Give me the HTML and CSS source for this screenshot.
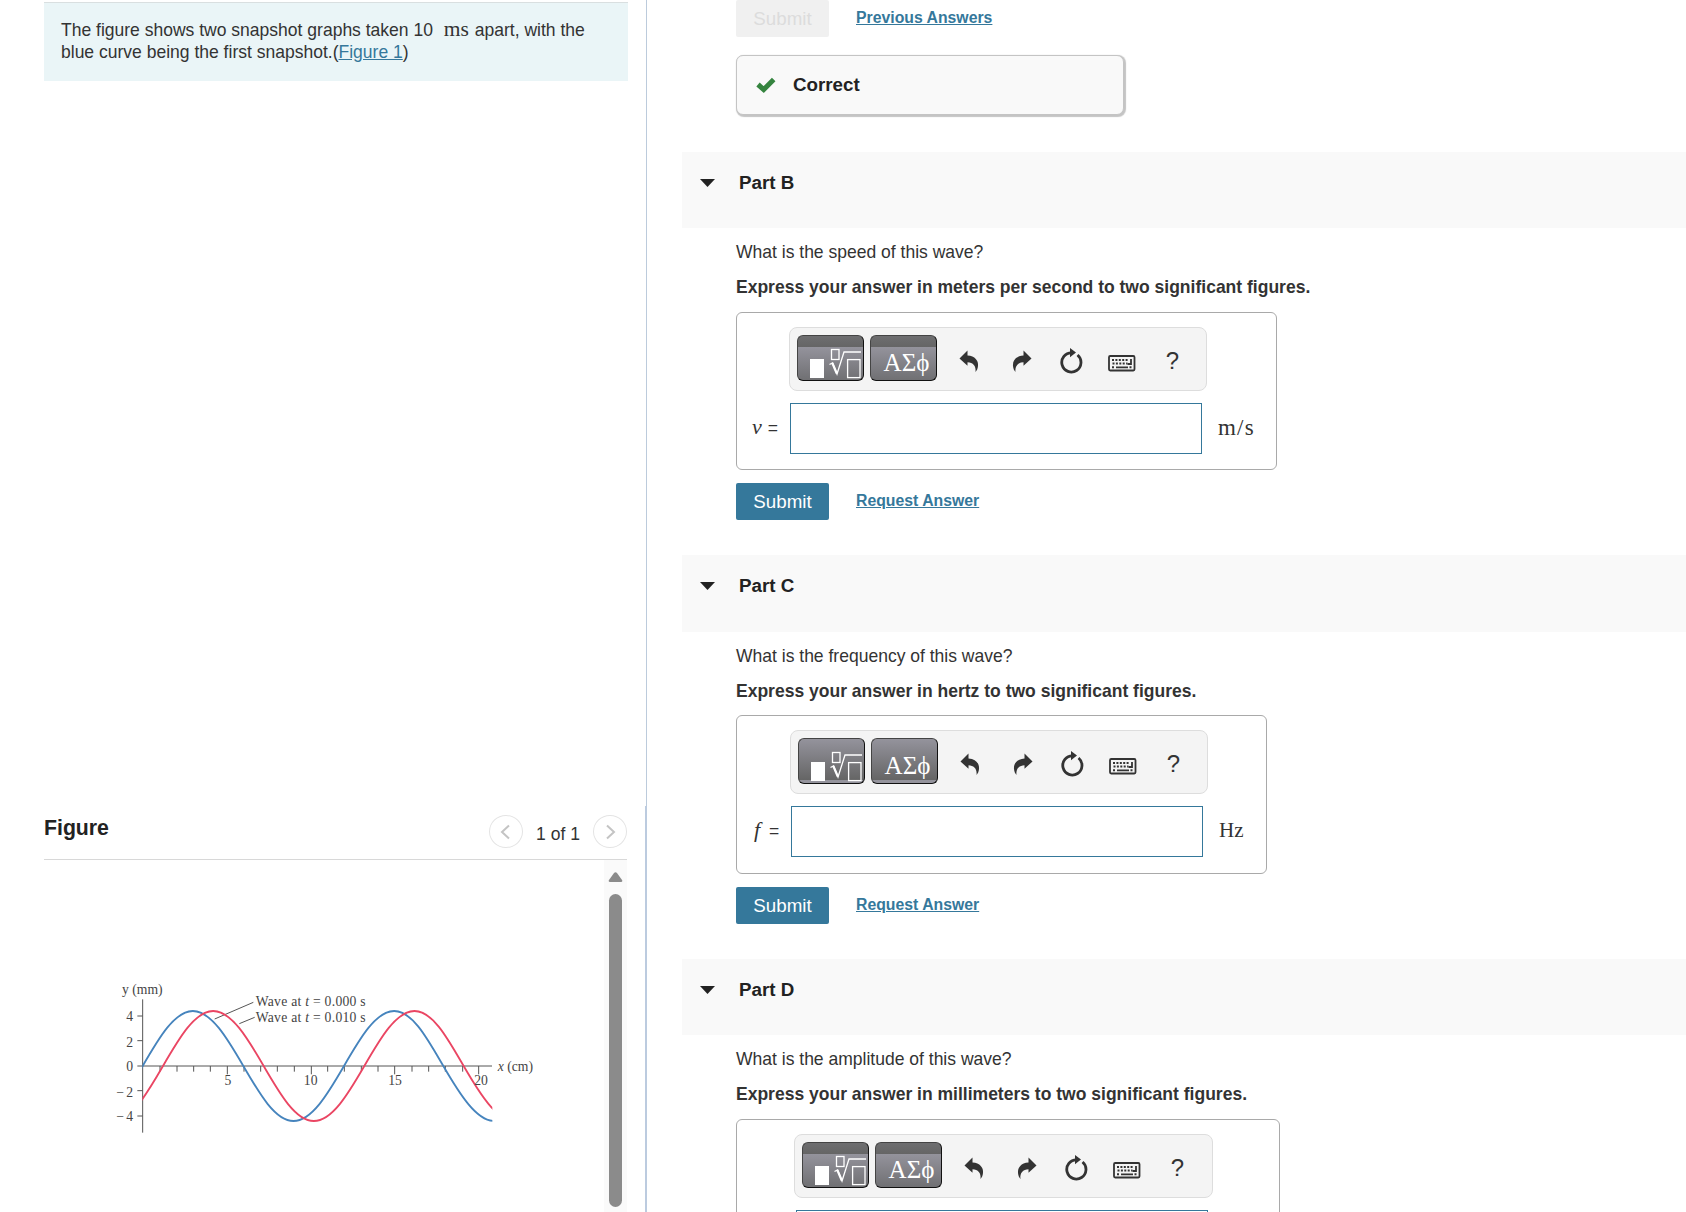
FILE: index.html
```html
<!DOCTYPE html>
<html lang="en">
<head>
  <meta charset="UTF-8" />
  <meta name="viewport" content="width=device-width, initial-scale=1.0"/>
  <title>Snapshot graphs</title>
  <link rel="stylesheet" href="styles.css">
</head>
<body>
  <!-- shared icons -->
  <svg class="sprite">
    <symbol id="i-root" viewBox="0 0 67 46">
      <rect x="13" y="24" width="14" height="19" fill="#fff"/>
      <g fill="none" stroke="#fff">
        <rect x="34.5" y="14.5" width="7.500" height="10" stroke-width="1.300"/>
        <path d="M32.500 29.500l3-1.500 4.500 11L47 17H64" stroke-width="1.300"/>
        <path d="M35.300 28l4.500 10.500" stroke-width="2.200"/>
        <rect x="50.600" y="24.600" width="12.400" height="18" stroke-width="1.300"/>
      </g>
    </symbol>
    <symbol id="i-undo" viewBox="0 0 20 22">
      <path d="M0.500 8.500L8.500 0.500V5.500C16 6 19.500 10.500 19 16C18.800 18.500 17.800 20.500 16.500 22C17.300 16 14 12.500 8.500 12.300V15.800Z"/>
    </symbol>
    <symbol id="i-reset" viewBox="0 0 24 26">
      <path d="M17.500 6.200A9.600 9.600 0 1 1 11.500 4.800" fill="none" stroke="#333" stroke-width="2.800" transform="rotate(8 12 14)"/>
      <path d="M11 0L17 4.600L11 9.200Z"/>
    </symbol>
    <symbol id="i-keys" viewBox="0 0 28 17">
      <rect x="1" y="1" width="25.500" height="14.500" rx="1.200" fill="none" stroke="#333" stroke-width="1.800"/>
      <path d="M4 5h17M4.500 8.500h15M4 12.300h2M21.500 12.300h2" fill="none" stroke="#333" stroke-width="1.900" stroke-dasharray="2 1.400"/>
      <path d="M8 12.300h12M23 4v5h-3.500" fill="none" stroke="#333" stroke-width="1.800"/>
    </symbol>
  </svg>

  <div class="page">
    <aside class="left">
      <section class="intro-pane">
        <div class="intro">
          The figure shows two snapshot graphs taken 10 <span class="math ms">ms</span> apart, with the blue curve being the first snapshot.(<a href="#">Figure 1</a>)
        </div>
      </section>

      <section class="figure-pane">
        <div class="figure-header">
          <h2>Figure</h2>
          <div class="pager">
            <button class="round prev"><svg width="12" height="16" viewBox="0 0 12 16"><path d="M10 1.500L3 8l7 6.500"/></svg></button>
            <span>1 of 1</span>
            <button class="round next"><svg width="12" height="16" viewBox="0 0 12 16"><path d="M2 1.500L9 8l-7 6.500"/></svg></button>
          </div>
        </div>
        <div class="figure-body">
          <svg class="graph" width="450" height="170" viewBox="0 0 1350 510">
            <defs>
              <clipPath id="plot"><rect x="127" y="100" width="1050" height="380"/></clipPath>
              <!-- starts in a trough, 602 units per period -->
              <path id="wave" d="M-22.500 453C32 453 79 372.500 128 288S224 123 278.500 123S381 203.500 430 288S526 453 580.500 453S683 372.500 732 288S828 123 882.500 123S981 203.500 1030 288S1130 453 1183 453"/>
            </defs>
            <path class="axis" d="M128 88V488M112 288H1176M112 138h16M112 212h16M112 362h16M112 438h16"/>
            <path class="axis" d="M180 288v17M231 288v17M281 288v17M331 288v17M382 288v25M432 288v17M482 288v17M532 288v17M583 288v17M634 288v25M683 288v17M733 288v17M784 288v17M834 288v17M884 288v25M936 288v17M986 288v17M1036 288v17M1088 288v17M1136 288v25"/>
            <path class="axis" d="M460 97L344 147M464 142L418 161"/>
            <g clip-path="url(#plot)">
              <use href="#wave" class="blue"/>
              <use href="#wave" class="red" x="61"/>
            </g>
            <g class="labels">
              <text x="66" y="72" textLength="122">y (mm)</text>
              <text x="1193" y="304" textLength="106"><tspan class="it">x</tspan> (cm)</text>
              <text x="467" y="108" textLength="330">Wave at <tspan class="it">t</tspan> = 0.000 s</text>
              <text x="467" y="155" textLength="330">Wave at <tspan class="it">t</tspan> = 0.010 s</text>
              <g text-anchor="end">
                <text x="99" y="153">4</text>
                <text x="99" y="230">2</text>
                <text x="99" y="304">0</text>
                <text x="99" y="380" textLength="50">−2</text>
                <text x="99" y="453" textLength="50">−4</text>
              </g>
              <g text-anchor="middle">
                <text x="384" y="346">5</text>
                <text x="632" y="346">10</text>
                <text x="885" y="346">15</text>
                <text x="1143" y="346">20</text>
              </g>
            </g>
          </svg>
          <div class="scrollbar">
            <svg width="15" height="10" viewBox="0 0 15 10"><path d="M6 1Q7.500-.5 9 1L14 8Q15 10 13 10H2Q0 10 1 8Z" fill="#8b8b8b"/></svg>
            <div class="thumb"></div>
          </div>
        </div>
      </section>
    </aside>

    <main class="right">
      <section class="part-a">
        <div class="actions">
          <button class="submit disabled">Submit</button>
          <a href="#">Previous Answers</a>
        </div>
        <div class="correct">
          <svg width="20" height="16" viewBox="0 0 20 16"><path d="M2 7.500L7.700 12.500L17.700 2.500" fill="none" stroke="#35843f" stroke-width="5"/></svg>
          <strong>Correct</strong>
        </div>
      </section>

      <section class="part part-b">
        <header><i class="caret"></i><h3>Part B</h3></header>
        <div class="part-body">
          <p>What is the speed of this wave?</p>
          <p class="hint">Express your answer in meters per second to two significant figures.</p>
          <div class="answer">
            <div class="toolbar">
              <button class="tool"><svg width="67" height="46"><use href="#i-root"/></svg></button>
              <button class="tool greek">ΑΣϕ</button>
              <span class="slot"><svg width="20" height="22"><use href="#i-undo"/></svg></span>
              <span class="slot redo"><svg width="20" height="22"><use href="#i-undo"/></svg></span>
              <span class="slot"><svg width="24" height="26"><use href="#i-reset"/></svg></span>
              <span class="slot keys"><svg width="28" height="17"><use href="#i-keys"/></svg></span>
              <span class="slot help">?</span>
            </div>
            <div class="entry">
              <label><span class="math var">v</span> =</label>
              <input type="text">
              <span class="math unit speed">m/s</span>
            </div>
          </div>
          <div class="actions">
            <button class="submit">Submit</button>
            <a href="#">Request Answer</a>
          </div>
        </div>
      </section>

      <section class="part part-c">
        <header><i class="caret"></i><h3>Part C</h3></header>
        <div class="part-body">
          <p>What is the frequency of this wave?</p>
          <p class="hint">Express your answer in hertz to two significant figures.</p>
          <div class="answer">
            <div class="toolbar">
              <button class="tool"><svg width="67" height="46"><use href="#i-root"/></svg></button>
              <button class="tool greek">ΑΣϕ</button>
              <span class="slot"><svg width="20" height="22"><use href="#i-undo"/></svg></span>
              <span class="slot redo"><svg width="20" height="22"><use href="#i-undo"/></svg></span>
              <span class="slot"><svg width="24" height="26"><use href="#i-reset"/></svg></span>
              <span class="slot keys"><svg width="28" height="17"><use href="#i-keys"/></svg></span>
              <span class="slot help">?</span>
            </div>
            <div class="entry">
              <label><span class="math var">f</span> =</label>
              <input type="text">
              <span class="math unit">Hz</span>
            </div>
          </div>
          <div class="actions">
            <button class="submit">Submit</button>
            <a href="#">Request Answer</a>
          </div>
        </div>
      </section>

      <section class="part part-d">
        <header><i class="caret"></i><h3>Part D</h3></header>
        <div class="part-body">
          <p>What is the amplitude of this wave?</p>
          <p class="hint">Express your answer in millimeters to two significant figures.</p>
          <div class="answer">
            <div class="toolbar">
              <button class="tool"><svg width="67" height="46"><use href="#i-root"/></svg></button>
              <button class="tool greek">ΑΣϕ</button>
              <span class="slot"><svg width="20" height="22"><use href="#i-undo"/></svg></span>
              <span class="slot redo"><svg width="20" height="22"><use href="#i-undo"/></svg></span>
              <span class="slot"><svg width="24" height="26"><use href="#i-reset"/></svg></span>
              <span class="slot keys"><svg width="28" height="17"><use href="#i-keys"/></svg></span>
              <span class="slot help">?</span>
            </div>
            <div class="entry">
              <label></label>
              <input type="text">
            </div>
          </div>
        </div>
      </section>
    </main>
  </div>
</body>
</html>
```
FILE: styles.css
```css
* {
  box-sizing: border-box;
}
body {
  margin: 0;
  font-family: "Liberation Sans", Arial, sans-serif;
  font-size: 17.53px;
  line-height: 22px;
  color: #333;
  background: #fff;
  overflow: hidden;
}
h2, h3, p {
  margin: 0;
}
button {
  font-family: inherit;
  padding: 0;
  border: 0;
}
a {
  color: #35789b;
}
.sprite {
  display: none;
}
.math {
  font-family: "Liberation Serif", "Times New Roman", serif;
}
.page {
  display: flex;
  height: 1212px;
  overflow: hidden;
}

/* left column */
.left {
  width: 647px;
  flex: none;
  display: flex;
  flex-direction: column;
}
.intro-pane {
  height: 806px;
  flex: none;
  padding: 2px 18px 0 44px;
  border-right: 1px solid #bccbdc;
}
.intro {
  height: 79px;
  padding: 16px 17px;
  background: #eaf5f7;
  border-top: 1px solid #d9dfe0;
}
.ms {
  font-size: 21.5px;
  line-height: 20px;
  margin: 0 1px 0 6px;
}
.figure-pane {
  flex: 1;
  display: flex;
  flex-direction: column;
  padding: 0 18px 0 44px;
  border-right: 2px solid #bccbdf;
}
.figure-header {
  height: 54px;
  flex: none;
  display: flex;
  justify-content: space-between;
  border-bottom: 1px solid #d8d8d8;
}
.figure-header h2 {
  font-size: 21.25px;
  color: #222;
  padding-top: 11px;
}
.pager {
  display: flex;
  padding-top: 9px;
}
.pager span {
  width: 70px;
  text-align: center;
  padding-top: 8px;
}
.round {
  width: 34px;
  height: 33px;
  border: 1px solid #e4e4e4;
  border-radius: 50%;
  background: #fff;
  display: flex;
  align-items: center;
  justify-content: center;
}
.prev {
  padding-right: 2px;
}
.next {
  padding-left: 2px;
}
.round path {
  fill: none;
  stroke: #c4c4c4;
  stroke-width: 2;
}
.figure-body {
  flex: 1;
  display: flex;
  justify-content: space-between;
  padding-left: 56px;
}
.graph {
  margin-top: 110px;
}
.axis {
  fill: none;
  stroke: #555;
  stroke-width: 3;
}
.blue, .red {
  fill: none;
  stroke: #4684bd;
  stroke-width: 5.5;
}
.red {
  stroke: #ea4663;
}
.labels {
  font-family: "Liberation Serif", serif;
  font-size: 41px;
  fill: #444;
}
.it {
  font-style: italic;
}
.scrollbar {
  width: 23px;
  background: #fafafa;
  display: flex;
  flex-direction: column;
  align-items: center;
  padding: 12px 0 5px;
}
.thumb {
  flex: 1;
  width: 13px;
  margin-top: 12px;
  border-radius: 7px;
  background: #8b8b8b;
}

/* right column */
.right {
  flex: 1;
  padding-left: 35px;
}
.part-a {
  height: 152px;
  padding-left: 54px;
}
.actions {
  display: flex;
  gap: 27px;
}
.actions a {
  font-size: 15.8px;
  font-weight: bold;
  padding-top: 7px;
}
.submit {
  width: 93px;
  height: 37px;
  border-radius: 2px;
  font-size: 18.75px;
  color: #fff;
  background: #35789b;
}
.disabled {
  color: #dcdcdc;
  background: #f0f0f0;
}
.correct {
  width: 388px;
  height: 60px;
  margin-top: 18px;
  padding-left: 19px;
  display: flex;
  align-items: center;
  gap: 17px;
  border: 1px solid #c4c4c4;
  border-radius: 7px;
  background: #f9f9f9;
  box-shadow: 1px 1px 1px 1px #c4c4c4;
  font-size: 18.75px;
  color: #222;
}
.part {
  height: 403px;
}
.part header {
  height: 76px;
  display: flex;
  padding: 20px 0 0 18px;
  background: #f9f9f9;
}
.caret {
  width: 15px;
  height: 8px;
  margin: 7px 24px 0 0;
  background: #222;
  clip-path: polygon(0 0, 100% 0, 50% 100%);
}
.part h3 {
  font-size: 18.75px;
  color: #222;
}
.part-body {
  padding: 13px 0 0 54px;
}
.hint {
  margin-top: 13px;
  font-weight: bold;
}
.answer {
  width: 541px;
  height: 158px;
  margin: 14px 0 13px;
  padding-top: 14px;
  border: 1px solid #a9a9a9;
  border-radius: 6px;
}
.toolbar {
  width: 418px;
  height: 64px;
  margin-left: 52px;
  padding: 7px;
  display: flex;
  border: 1px solid #ddd;
  border-radius: 8px;
  background: #f4f4f4;
}
.tool {
  width: 67px;
  height: 46px;
  margin-right: 6px;
  border: 1px solid #111;
  border-top-color: #444;
  border-left-color: #444;
  border-right-width: 1.5px;
  border-radius: 6px;
  background: linear-gradient(#6e6e70, #656565 11px, #94939c 11px, #707073);
  overflow: hidden;
}
.tool svg {
  display: block;
  margin: -1px;
}
.greek {
  padding: 9px 0 0 6px;
  color: #fff;
  font-family: "Liberation Serif", serif;
  font-size: 25px;
}
.slot {
  width: 51px;
  padding-top: 4px;
  display: flex;
  align-items: center;
  justify-content: center;
  fill: #333;
}
.redo svg {
  transform: scaleX(-1);
  margin-left: 4px;
}
.keys {
  padding-top: 9px;
}
.help {
  padding-top: 4px;
  font-size: 24px;
}
.entry {
  display: flex;
  align-items: center;
  margin-top: 12px;
}
.entry label {
  width: 53px;
  padding: 0 0 3px 15px;
  flex: none;
  white-space: nowrap;
}
.var {
  font-style: italic;
  font-size: 22px;
  margin-right: 1px;
}
.entry input {
  width: 412px;
  height: 51px;
  border: 1px solid #35789b;
  background: #fff;
}
.unit {
  font-size: 21px;
  margin-left: 16px;
  padding-bottom: 3px;
}
.speed {
  font-size: 23px;
  letter-spacing: 1.2px;
  padding-bottom: 1px;
}
.part-c {
  height: 404px;
}
.part-c header {
  height: 77px;
}
.part-c .answer {
  width: 531px;
  height: 159px;
  margin-top: 13px;
}
.part-c .toolbar {
  margin-left: 53px;
}
.part-c .entry label {
  width: 54px;
}
.part-c .var {
  margin: 0 4px 0 2px;
}
.part-c .tool {
  background: linear-gradient(#94939c, #656565 41px, #94939c 41px);
}
.part-d .answer {
  width: 544px;
}
.part-d .toolbar {
  width: 419px;
  margin-left: 57px;
}
.part-d .entry label {
  width: 59px;
}
```
